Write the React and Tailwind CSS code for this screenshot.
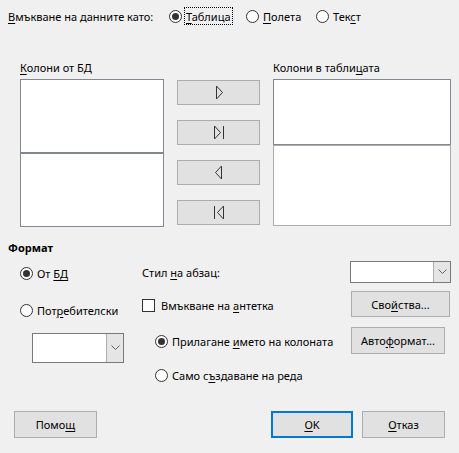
import React from 'react';

function Radio({ checked }) {
  return (
    <span className="w-[13px] h-[13px] shrink-0 rounded-full border border-[#333] bg-white flex items-center justify-center">
      {checked && <span className="w-[7px] h-[7px] rounded-full bg-[#333]" />}
    </span>
  );
}

function Key({ children }) {
  return <span className="underline underline-offset-[2px] decoration-1">{children}</span>;
}

function Btn({ children, className = '' }) {
  return (
    <div className={`bg-[#e1e1e1] border border-[#adadad] flex items-center justify-center ${className}`}>
      {children}
    </div>
  );
}

function Combo({ className = '' }) {
  return (
    <div className={`flex bg-white border border-[#7a7a7a] ${className}`}>
      <div className="flex-1" />
      <div className="w-[17px] bg-[#e5e5e5] border-l border-[#adadad] flex items-center justify-center">
        <svg width="9" height="6" viewBox="0 0 9 6" fill="none" stroke="#606060" strokeWidth="1">
          <path d="M0.5 0.5 L4.5 4.5 L8.5 0.5" />
        </svg>
      </div>
    </div>
  );
}

function Arrow({ kind }) {
  return (
    <svg width="12" height="15" viewBox="0 0 12 15" fill="none" stroke="#333" strokeWidth="1">
      {kind === 'right' && <path d="M3.5 1 L9.5 7.5 L3.5 14 Z" />}
      {kind === 'rightAll' && (
        <>
          <path d="M1.5 1 L7.5 7.5 L1.5 14 Z" />
          <path d="M10.5 1 L10.5 14" />
        </>
      )}
      {kind === 'left' && <path d="M8.5 1 L2.5 7.5 L8.5 14 Z" />}
      {kind === 'leftAll' && (
        <>
          <path d="M1.5 1 L1.5 14" />
          <path d="M10.5 1 L4.5 7.5 L10.5 14 Z" />
        </>
      )}
    </svg>
  );
}

export default function App() {
  return (
    <div className="w-[459px] h-[453px] bg-[#f0f0f0] text-black text-[11px] leading-[15px] font-['Noto_Sans','Liberation_Sans',sans-serif] flex flex-col overflow-hidden">
      {/* Insert data as */}
      <div className="mt-[7px] ml-[8px] h-[18px] flex items-center">
        <div className="w-[161px]"><Key>В</Key>мъкване на данните като:</div>
        <div className="w-[77px] flex items-center">
          <Radio checked />
          <span className="ml-[2px] px-[1px] h-[18px] flex items-center border border-dotted border-black">
            <span><Key>Т</Key>аблица</span>
          </span>
        </div>
        <div className="w-[70px] flex items-center gap-[4px]">
          <Radio />
          <span><Key>П</Key>олета</span>
        </div>
        <div className="flex items-center gap-[4px]">
          <Radio />
          <span>Тек<Key>с</Key>т</span>
        </div>
      </div>

      {/* Columns */}
      <div className="mt-[35px] flex">
        <div className="ml-[20px] w-[144px]">
          <div className="h-[15px]"><Key>К</Key>олони от БД</div>
          <div className="mt-[4px] h-[74px] bg-white border border-[#828790]" />
          <div className="h-[74px] bg-white border border-[#828790]" />
        </div>
        <div className="ml-[13px] w-[83px] pt-[20px] flex flex-col gap-[15px]">
          <Btn className="h-[25px]"><Arrow kind="right" /></Btn>
          <Btn className="h-[25px]"><Arrow kind="rightAll" /></Btn>
          <Btn className="h-[25px]"><Arrow kind="left" /></Btn>
          <Btn className="h-[25px]"><Arrow kind="leftAll" /></Btn>
        </div>
        <div className="ml-[13px] w-[178px]">
          <div className="h-[15px]">Колони в табли<Key>ц</Key>ата</div>
          <div className="mt-[4px] h-[66px] bg-white border border-[#828790]" />
          <div className="h-[81px] bg-white border border-[#acacac]" />
        </div>
      </div>

      {/* Format */}
      <div className="mt-[13px] ml-[8px] h-[15px] font-bold">Формат</div>
      <div className="mt-[6px] flex">
        <div className="ml-[20px] w-[122px]">
          <div className="h-[25px] flex items-center gap-[4px]">
            <Radio checked />
            <span>От <Key>БД</Key></span>
          </div>
          <div className="mt-[12px] h-[25px] flex items-center gap-[4px]">
            <Radio />
            <span>Пот<Key>р</Key>ебителски</span>
          </div>
          <Combo className="mt-[10px] ml-[12px] w-[92px] h-[30px]" />
        </div>
        <div className="w-[208px]">
          <div className="h-[22px] flex items-center">
            <span>Стил <Key>н</Key>а абзац:</span>
          </div>
          <div className="mt-[9px] h-[26px] flex items-center gap-[6px]">
            <span className="w-[13px] h-[13px] border border-[#333] bg-white" />
            <span>Вмъкване на <Key>а</Key>нтетка</span>
          </div>
          <div className="mt-[10px] ml-[13px] h-[26px] flex items-center gap-[4px]">
            <Radio checked />
            <span>Прилагане <Key>и</Key>мето на колоната</span>
          </div>
          <div className="mt-[8px] ml-[13px] h-[26px] flex items-center gap-[4px]">
            <Radio />
            <span>Само с<Key>ъ</Key>здаване на реда</span>
          </div>
        </div>
        <div className="w-[101px]">
          <Combo className="h-[22px] w-[101px]" />
          <Btn className="mt-[8px] ml-[1px] w-[99px] h-[26px]">
            <span>Сво<Key>й</Key>ства...</span>
          </Btn>
          <Btn className="mt-[10px] ml-[1px] w-[94px] h-[27px]">
            <span>Авто<Key>ф</Key>ормат...</span>
          </Btn>
        </div>
      </div>

      {/* Bottom buttons */}
      <div className="mt-auto mb-[15px] flex">
        <Btn className="ml-[14px] w-[83px] h-[27px]">
          <span>Помо<Key>щ</Key></span>
        </Btn>
        <div className="flex-1" />
        <div className="w-[82px] h-[27px] bg-[#e1e1e1] border-2 border-[#0078d7] flex items-center justify-center">
          <span><Key>О</Key>K</span>
        </div>
        <Btn className="ml-[9px] mr-[14px] w-[83px] h-[27px]">
          <span><Key>О</Key>тказ</span>
        </Btn>
      </div>
    </div>
  );
}
